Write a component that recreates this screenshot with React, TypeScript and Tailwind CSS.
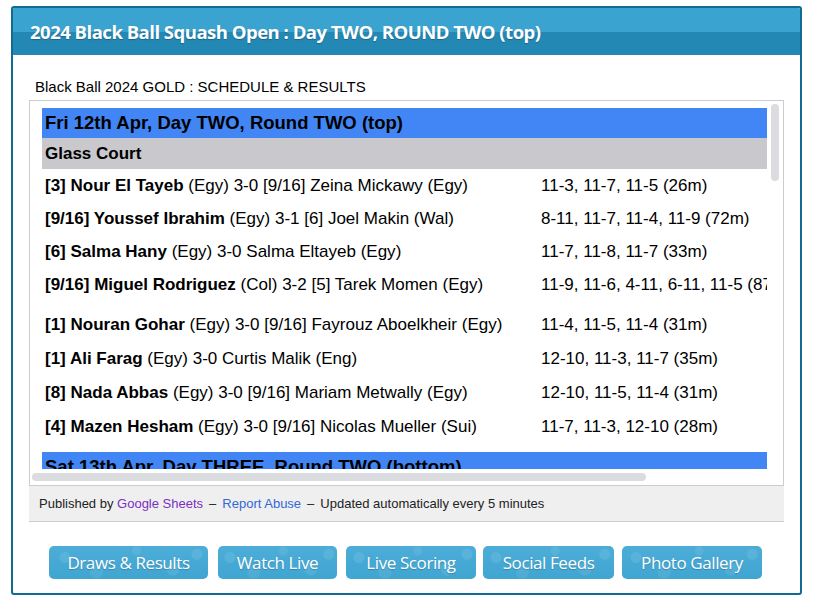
import React from 'react';

type Match = {
  seed1: string;
  name1: string;
  nat1: string;
  result: string;
  seed2: string;
  name2: string;
  nat2: string;
  score: string;
};

const firstGroup: Match[] = [
  { seed1: '[3]', name1: 'Nour El Tayeb', nat1: 'Egy', result: '3-0', seed2: '[9/16] ', name2: 'Zeina Mickawy', nat2: 'Egy', score: '11-3, 11-7, 11-5 (26m)' },
  { seed1: '[9/16]', name1: 'Youssef Ibrahim', nat1: 'Egy', result: '3-1', seed2: '[6] ', name2: 'Joel Makin', nat2: 'Wal', score: '8-11, 11-7, 11-4, 11-9 (72m)' },
  { seed1: '[6]', name1: 'Salma Hany', nat1: 'Egy', result: '3-0', seed2: '', name2: 'Salma Eltayeb', nat2: 'Egy', score: '11-7, 11-8, 11-7 (33m)' },
  { seed1: '[9/16]', name1: 'Miguel Rodriguez', nat1: 'Col', result: '3-2', seed2: '[5] ', name2: 'Tarek Momen', nat2: 'Egy', score: '11-9, 11-6, 4-11, 6-11, 11-5 (87m)' },
];

const secondGroup: Match[] = [
  { seed1: '[1]', name1: 'Nouran Gohar', nat1: 'Egy', result: '3-0', seed2: '[9/16] ', name2: 'Fayrouz Aboelkheir', nat2: 'Egy', score: '11-4, 11-5, 11-4 (31m)' },
  { seed1: '[1]', name1: 'Ali Farag', nat1: 'Egy', result: '3-0', seed2: '', name2: 'Curtis Malik', nat2: 'Eng', score: '12-10, 11-3, 11-7 (35m)' },
  { seed1: '[8]', name1: 'Nada Abbas', nat1: 'Egy', result: '3-0', seed2: '[9/16] ', name2: 'Mariam Metwally', nat2: 'Egy', score: '12-10, 11-5, 11-4 (31m)' },
  { seed1: '[4]', name1: 'Mazen Hesham', nat1: 'Egy', result: '3-0', seed2: '[9/16] ', name2: 'Nicolas Mueller', nat2: 'Sui', score: '11-7, 11-3, 12-10 (28m)' },
];

const buttons = [
  { label: 'Draws & Results', cls: 'w-[159px]' },
  { label: 'Watch Live', cls: 'w-[119px] ml-[10px]' },
  { label: 'Live Scoring', cls: 'w-[130px] ml-[9px]' },
  { label: 'Social Feeds', cls: 'w-[131px] ml-[7px]' },
  { label: 'Photo Gallery', cls: 'w-[140px] ml-[8px]' },
];

const MatchRow = ({ m, tall }: { m: Match; tall?: boolean }) => (
  <div className={`flex items-center whitespace-nowrap text-[17px] text-black ${tall ? 'h-[34px]' : 'h-[33px]'}`}>
    <div className="w-[499px] shrink-0 pl-[3px]">
      <b>
        {m.seed1} {m.name1}
      </b>{' '}
      ({m.nat1}) {m.result} {m.seed2}
      {m.name2} ({m.nat2})
    </div>
    <div>{m.score}</div>
  </div>
);

// faint bubble texture on the nav buttons
const bubbles =
  'bg-[radial-gradient(circle_at_10%_35%,rgba(255,255,255,0.09)_0_5px,transparent_6px),radial-gradient(circle_at_30%_80%,rgba(255,255,255,0.07)_0_6px,transparent_7px),radial-gradient(circle_at_55%_15%,rgba(255,255,255,0.08)_0_4px,transparent_5px),radial-gradient(circle_at_78%_70%,rgba(255,255,255,0.08)_0_6px,transparent_7px),radial-gradient(circle_at_93%_25%,rgba(255,255,255,0.09)_0_5px,transparent_6px),linear-gradient(#4cadd8,#40a5d1)]';

export default function App() {
  return (
    <div className="w-[813px] h-[609px] bg-white pt-[6px] pl-[11px] font-['Liberation_Sans',Arial,sans-serif]">
      <div className="w-[791px] h-[589px] border-2 border-[#136b94] rounded-[3px] overflow-hidden flex flex-col">
        {/* header */}
        <div className="h-[47px] shrink-0 flex items-center px-[17px] bg-[linear-gradient(#3aa3cf_0,#3aa3cf_50%,#2388b4_50%,#2388b4_100%)]">
          <h1 className="text-white font-['Open_Sans',sans-serif] font-bold text-[18.5px] tracking-[-0.5px] [text-shadow:0_1px_1px_rgba(0,0,0,0.25)]">
            2024 Black Ball Squash Open : Day TWO, ROUND TWO (top)
          </h1>
        </div>

        {/* body */}
        <div className="flex-1 flex flex-col px-[16px]">
          <div className="h-[45px] pt-[23px] pl-[6px] text-[15px] leading-[17px] text-black">
            Black Ball 2024 GOLD : SCHEDULE &amp; RESULTS
          </div>

          <div className="w-[755px] border-t border-l border-r border-[#ccc] flex flex-col">
            <div className="flex h-[368px]">
              <div className="w-[738px] h-full overflow-hidden">
                <div className="w-[900px] pt-[7px] pl-[12px]">
                  <div className="h-[30px] bg-[#4285f4] flex items-center pl-[3px] font-bold text-[18.5px] text-black whitespace-nowrap">
                    Fri 12th Apr, Day TWO, Round TWO (top)
                  </div>
                  <div className="h-[31px] bg-[#c9c8cc] flex items-center pl-[3px] font-bold text-[17px] text-black">
                    Glass Court
                  </div>
                  {firstGroup.map((m) => (
                    <MatchRow key={m.name1} m={m} />
                  ))}
                  <div className="h-[7px]" />
                  {secondGroup.map((m) => (
                    <MatchRow key={m.name1} m={m} tall />
                  ))}
                  <div className="h-[8px]" />
                  <div className="h-[30px] bg-[#4285f4] flex items-center pl-[3px] font-bold text-[18.5px] text-black whitespace-nowrap">
                    Sat 13th Apr, Day THREE, Round TWO (bottom)
                  </div>
                </div>
              </div>
              {/* vertical scrollbar */}
              <div className="w-[16px] h-full pt-[3px] pl-[4px]">
                <div className="w-[8px] h-[77px] rounded-full bg-[#dadce0]" />
              </div>
            </div>
            {/* horizontal scrollbar */}
            <div className="h-[16px] pt-[4px] pl-[2px]">
              <div className="w-[614px] h-[8px] rounded-full bg-[#dadce0]" />
            </div>
          </div>

          <div className="w-[755px] h-[37px] bg-[#efefef] border-t border-b border-[#ccc] flex items-center pl-[10px] text-[13px] text-[#222] whitespace-nowrap">
            Published by&nbsp;<span className="text-[#7b2fc4]">Google Sheets</span>
            <span className="mx-[6px]">–</span>
            <span className="text-[#3367d6]">Report Abuse</span>
            <span className="mx-[6px]">–</span>
            Updated automatically every 5 minutes
          </div>

          <div className="flex pl-[20px] pt-[24px]">
            {buttons.map((b) => (
              <div
                key={b.label}
                className={`${b.cls} h-[33px] rounded-[5px] flex items-center justify-center text-white font-['Open_Sans',sans-serif] text-[17px] tracking-[-0.4px] [text-shadow:0_1px_1px_rgba(0,0,0,0.2)] ${bubbles}`}
              >
                {b.label}
              </div>
            ))}
          </div>
        </div>
      </div>
    </div>
  );
}
